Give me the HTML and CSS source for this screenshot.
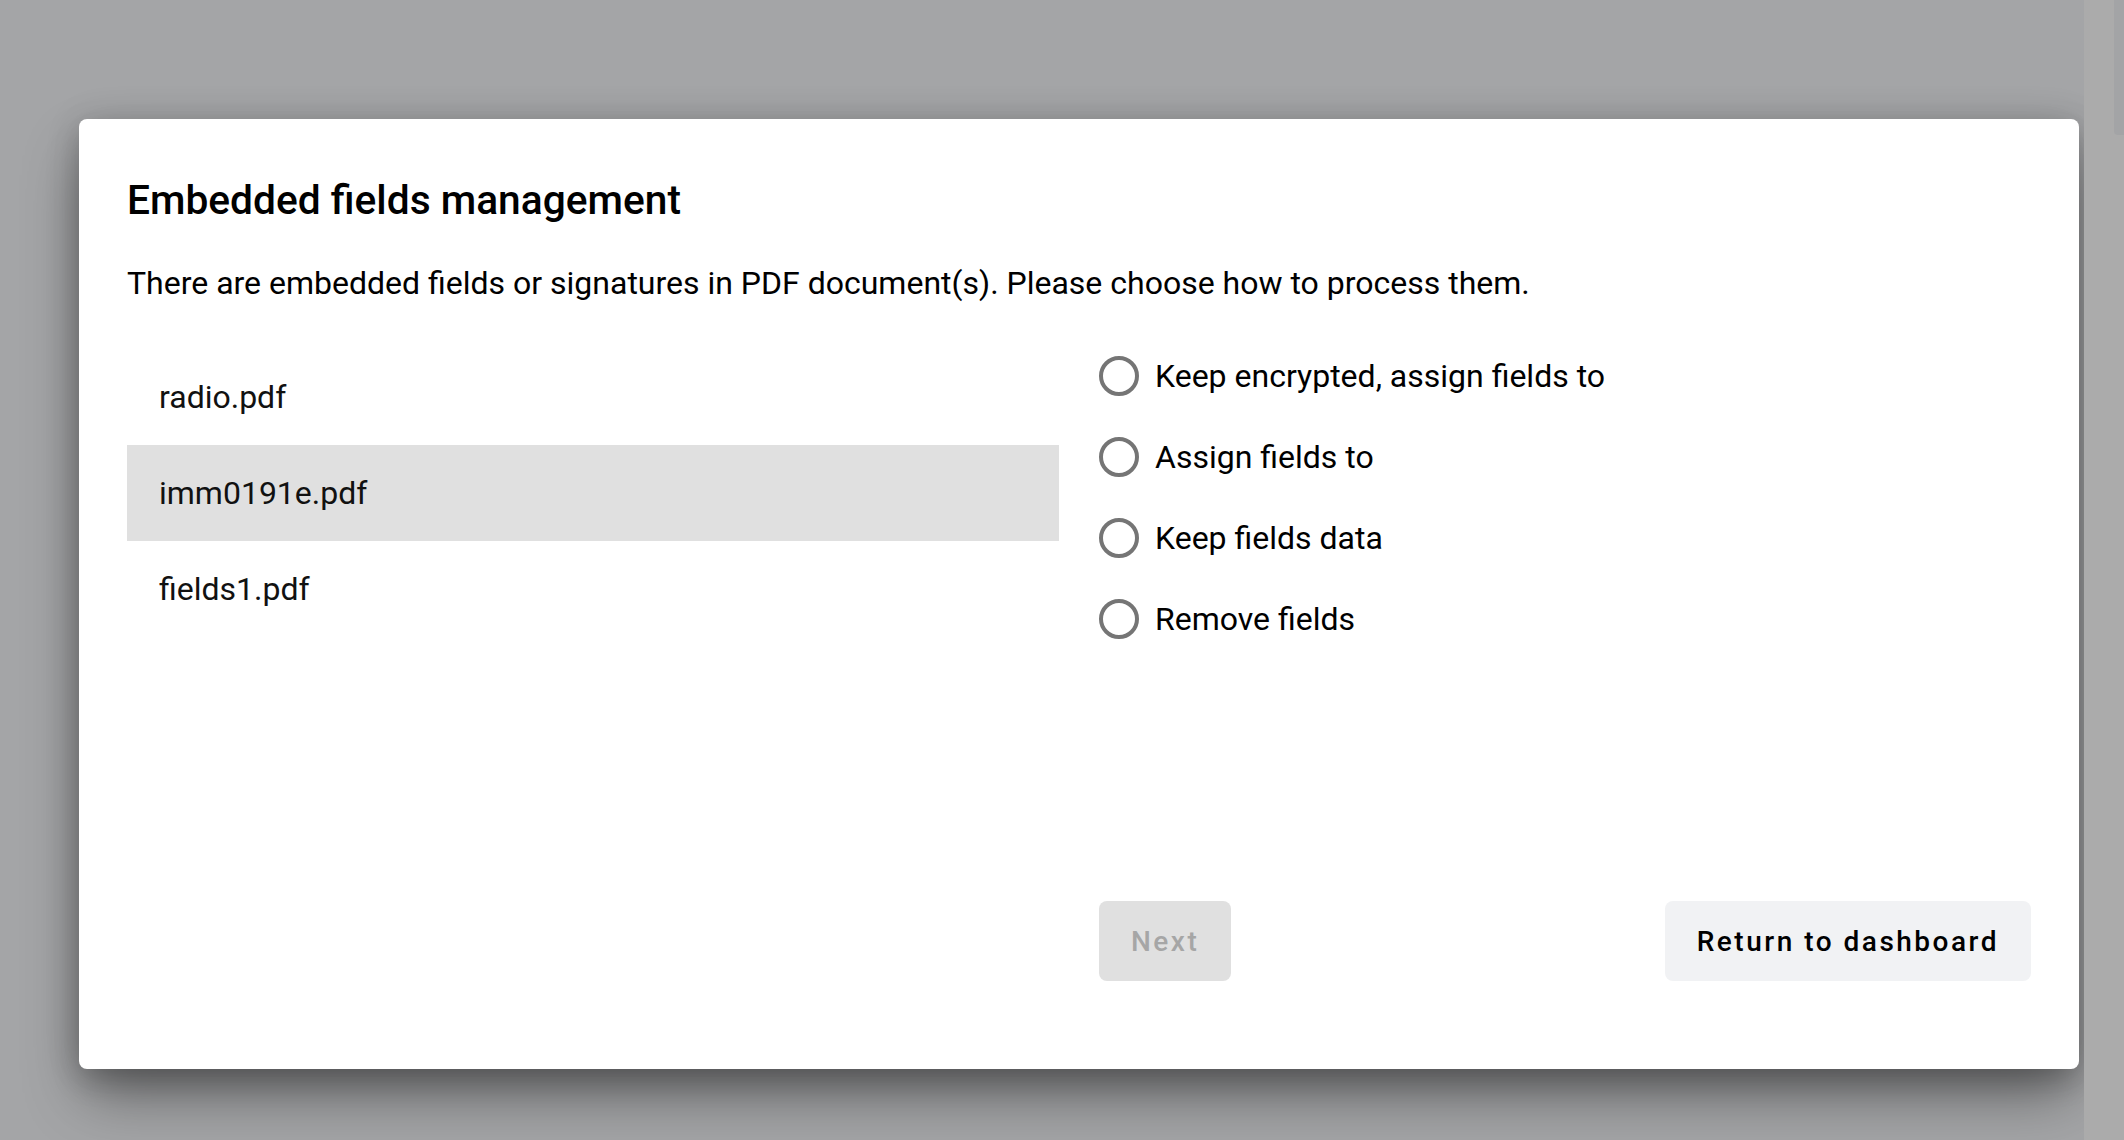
FILE: index.html
```html
<!DOCTYPE html>
<html lang="en">
<head>
<meta charset="utf-8">
<title>Embedded fields management</title>
<link rel="stylesheet" href="styles.css">
</head>
<body>
<div class="app">
  <main class="backdrop">
    <section class="dialog" role="dialog" aria-labelledby="dlg-title">
      <h1 class="dialog-title" id="dlg-title">Embedded fields management</h1>
      <p class="dialog-desc">There are embedded fields or signatures in PDF document(s). Please choose how to process them.</p>
      <div class="dialog-body">
        <ul class="file-list">
          <li class="file-item">radio.pdf</li>
          <li class="file-item is-selected">imm0191e.pdf</li>
          <li class="file-item">fields1.pdf</li>
        </ul>
        <div class="options-col">
          <div class="options">
            <label class="option"><span class="radio"></span><span class="option-label">Keep encrypted, assign fields to</span></label>
            <label class="option"><span class="radio"></span><span class="option-label">Assign fields to</span></label>
            <label class="option"><span class="radio"></span><span class="option-label">Keep fields data</span></label>
            <label class="option"><span class="radio"></span><span class="option-label">Remove fields</span></label>
          </div>
          <div class="actions">
            <button class="btn btn-disabled" disabled>Next</button>
            <button class="btn btn-light">Return to dashboard</button>
          </div>
        </div>
      </div>
    </section>
  </main>
  <aside class="scrollbar"><div class="scroll-thumb"></div></aside>
</div>
</body>
</html>
```
FILE: styles.css
```css
* { box-sizing: border-box; }
html, body { margin: 0; padding: 0; }
body {
  width: 2124px;
  height: 1140px;
  overflow: hidden;
  font-family: Roboto, "Liberation Sans", Arial, sans-serif;
  background: #a4a5a7;
  color: #000;
}
.app {
  display: flex;
  height: 1140px;
}
.backdrop {
  flex: 1;
  padding-top: 119px;
  padding-left: 79px;
}
.scrollbar {
  width: 40px;
  background: #ababab;
  display: flex;
  justify-content: flex-end;
}
.scroll-thumb {
  width: 10px;
  height: 135px;
  background: #a3a4a6;
  border-bottom-left-radius: 4px;
}
.dialog {
  width: 2000px;
  height: 950px;
  background: #fff;
  border-radius: 8px;
  padding: 48px 48px 88px;
  display: flex;
  flex-direction: column;
  box-shadow: 0 30px 60px -6px rgba(0,0,0,0.42), 0 10px 30px rgba(0,0,0,0.18), 0 0 40px rgba(0,0,0,0.08);
}
.dialog-title {
  margin: 9px 0 0;
  font-size: 40.7px;
  line-height: 48px;
  font-weight: 500;
  color: #000;
}
.dialog-desc {
  margin: 37px 0 0;
  font-size: 32px;
  line-height: 44px;
  font-weight: 400;
  color: #000;
}
.dialog-body {
  flex: 1;
  margin-top: 44px;
  display: grid;
  grid-template-columns: 932px 932px;
  column-gap: 40px;
}
.file-list {
  list-style: none;
  margin: 0;
  padding: 0;
}
.file-item {
  height: 96px;
  padding: 0 0 0 32px;
  display: flex;
  align-items: center;
  font-size: 32px;
  line-height: 40px;
  color: #111;
}
.file-item.is-selected {
  background: #e0e0e0;
}
.options-col {
  display: flex;
  flex-direction: column;
}
.options {
  padding-top: 7px;
  display: flex;
  flex-direction: column;
  gap: 41px;
}
.option {
  display: flex;
  align-items: center;
  gap: 16px;
  height: 40px;
  font-size: 32px;
  line-height: 38px;
  color: #000;
}
.option-label {
  display: block;
  padding-bottom: 1px;
}
.radio {
  width: 40px;
  height: 40px;
  border-radius: 50%;
  border: 4px solid #757575;
  flex: none;
}
.actions {
  margin-top: auto;
  display: flex;
  justify-content: space-between;
}
.btn {
  height: 80px;
  padding: 0 32px;
  border: none;
  border-radius: 8px;
  font-family: Roboto, "Liberation Sans", Arial, sans-serif;
  font-size: 28px;
  font-weight: 500;
  letter-spacing: 2.5px;
  min-width: 128px;
}
.btn-disabled {
  background: #e0e0e0;
  color: #a6a6a6;
}
.btn-light {
  background: #f1f2f4;
  color: #000;
}
```
